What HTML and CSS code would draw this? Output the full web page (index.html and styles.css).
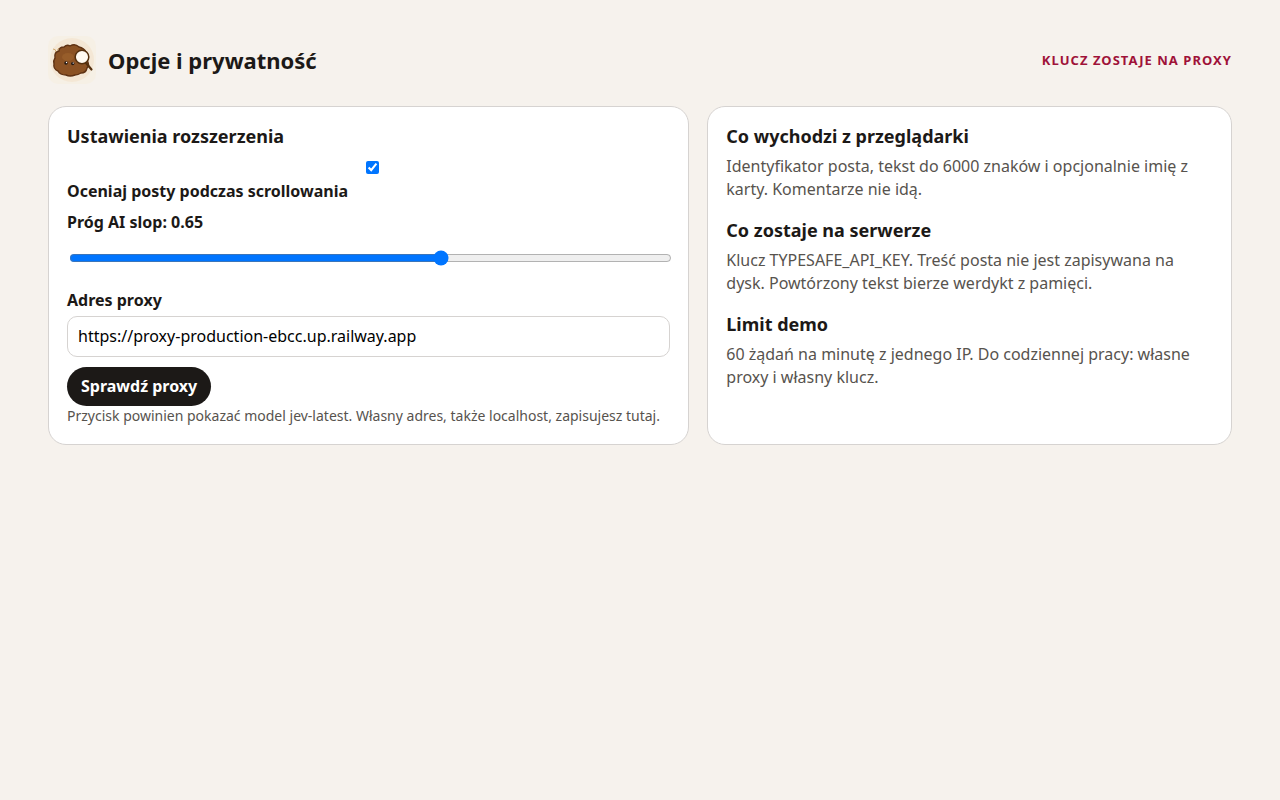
FILE: index.html
```html
<!DOCTYPE html>
<html lang="pl">
<head>
    <meta charset="UTF-8">
    <meta name="viewport" content="width=device-width, initial-scale=1.0">
    <title>Opcje i prywatność</title>
    <link rel="stylesheet" href="styles.css">
</head>
<body>
    <header class="top">
        <div class="brand">
            <svg class="logo" viewBox="0 0 48 48" aria-hidden="true">
                <rect width="48" height="48" rx="10" fill="#f6f0e5"/>
                <circle cx="24" cy="24" r="22" fill="#f4e7d5"/>
                <path d="M5 13q3 0 3 3q-1 2 1 3M11 12q-2 1-1 3" fill="none" stroke="#d0aa70" stroke-width="1"/>
                <path d="M11 15Q11 11 16 11Q19 8 22 10Q27 7 31 11Q36 12 38 16Q41 20 39 24Q42 29 39 32Q38 37 33 37Q30 39 27 39Q22 41 18 39Q12 39 10 35Q5 33 6 28Q5 25 7 22Q6 16 11 15Z" fill="#8b5224" stroke="#5f3213" stroke-width="1.4"/>
                <ellipse cx="20" cy="21" rx="6" ry="4" fill="#a4672f" opacity=".5"/>
                <circle cx="18" cy="27" r="1.7" fill="#211713"/>
                <circle cx="24.7" cy="27.6" r="1.7" fill="#211713"/>
                <circle cx="18.5" cy="26.5" r=".7" fill="#fff"/>
                <circle cx="25.2" cy="27.1" r=".7" fill="#fff"/>
                <path d="M38 27l5.500 6.500" stroke="#54300f" stroke-width="2.2" stroke-linecap="round"/>
                <circle cx="34" cy="21" r="6.8" fill="#fffaf2" stroke="#54300f" stroke-width="1.5"/>
            </svg>
            <h1>Opcje i prywatność</h1>
        </div>
        <span class="tag">Klucz zostaje na proxy</span>
    </header>

    <main class="grid">
        <section class="card">
            <h2>Ustawienia rozszerzenia</h2>
            <label for="enabled"><input type="checkbox" id="enabled" checked>Oceniaj posty podczas scrollowania</label>
            <label for="threshold">Próg AI slop: <span id="thresholdValue">0.65</span></label>
            <input type="range" id="threshold" min="0.08" max="1" step="0.01" value="0.65">
            <label for="proxy">Adres proxy</label>
            <input type="text" id="proxy" value="https://proxy-production-ebcc.up.railway.app" spellcheck="false">
            <button type="button" class="btn">Sprawdź proxy</button>
            <p class="hint">Przycisk powinien pokazać model jev-latest. Własny adres, także localhost, zapisujesz tutaj.</p>
        </section>

        <section class="card info">
            <h2>Co wychodzi z przeglądarki</h2>
            <p>Identyfikator posta, tekst do 6000 znaków i opcjonalnie imię z karty. Komentarze nie idą.</p>
            <h2>Co zostaje na serwerze</h2>
            <p>Klucz TYPESAFE_API_KEY. Treść posta nie jest zapisywana na dysk. Powtórzony tekst bierze werdykt z pamięci.</p>
            <h2>Limit demo</h2>
            <p>60 żądań na minutę z jednego IP. Do codziennej pracy: własne proxy i własny klucz.</p>
        </section>
    </main>

    <script>
        const threshold = document.getElementById("threshold");
        threshold.addEventListener("input", () => {
            document.getElementById("thresholdValue").textContent = Number(threshold.value).toFixed(2);
        });
    </script>
</body>
</html>
```

FILE: styles.css
```css
* {
    box-sizing: border-box;
}
body {
    margin: 0;
    padding: 36px 48px;
    background: #f6f2ed;
    color: #1c1917;
    font-family: "Noto Sans", sans-serif;
    font-size: 16px;
    line-height: 23px;
}
.top {
    display: flex;
    justify-content: space-between;
    align-items: center;
    margin-bottom: 22px;
}
.brand {
    display: flex;
    align-items: center;
    gap: 12px;
}
.logo {
    width: 48px;
    height: 48px;
}
h1 {
    margin: 0;
    font-size: 22px;
    line-height: 31px;
}
.tag {
    color: #9f1239;
    font-size: 13px;
    font-weight: 700;
    letter-spacing: 0.08em;
    text-transform: uppercase;
}
.grid {
    display: grid;
    grid-template-columns: 11fr 9fr;
    gap: 18px;
}
.card {
    padding: 18px;
    background: #fff;
    border: 1px solid #d6d3d1;
    border-radius: 18px;
}
h2 {
    margin: 0 0 8px;
    font-size: 18px;
    line-height: 22px;
}
p {
    margin: 0 0 18px;
    color: #57534e;
}
label {
    display: block;
    margin-bottom: 8px;
    font-weight: 700;
}
label[for="enabled"] {
    margin-top: 10px;
}
input {
    width: 100%;
    font: inherit;
    accent-color: #0075ff;
}
input[type="range"] {
    display: block;
    margin: 16px 2px 23px;
}
label[for="proxy"] {
    margin-bottom: 4px;
}
input[type="text"] {
    display: block;
    padding: 8px 10px;
    border: 1px solid #d6d3d1;
    border-radius: 10px;
    background: #fff;
    color: #000;
}
.btn {
    display: block;
    margin-top: 10px;
    padding: 8px 14px;
    border: 0;
    border-radius: 20px;
    background: #1c1917;
    color: #fff;
    font: inherit;
    font-weight: 700;
    cursor: pointer;
}
.hint {
    margin: 0;
    font-size: 14px;
    line-height: 20px;
}
.info p:last-child {
    margin-bottom: 0;
}

@media (max-width: 760px) {
    body {
        padding: 24px 16px;
    }
    .grid {
        grid-template-columns: 1fr;
    }
}
```
